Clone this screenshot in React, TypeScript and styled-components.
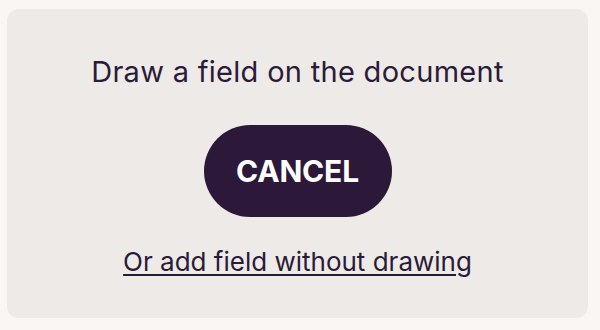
import React from "react";
import styled, { createGlobalStyle } from "styled-components";

const GlobalStyle = createGlobalStyle`
  html, body {
    margin: 0;
    padding: 0;
    background: #f9f6f3;
    font-family: Inter, "Noto Sans", sans-serif;
  }
`;

const Page = styled.div`
  padding: 9px 12px 12px 7px;
`;

const Panel = styled.div`
  height: 309px;
  box-sizing: border-box;
  background: #eeeae7;
  border-radius: 12px;
  display: flex;
  flex-direction: column;
  align-items: center;
  padding-top: 46px;
`;

const Title = styled.div`
  font-size: 29px;
  line-height: 34px;
  color: #2a1b38;
  letter-spacing: 0.3px;
`;

const CancelButton = styled.button`
  margin-top: 36px;
  width: 188px;
  height: 92px;
  border: none;
  border-radius: 46px;
  background: #2c1838;
  color: #ffffff;
  font-family: Inter, "Noto Sans", sans-serif;
  font-weight: 700;
  font-size: 30px;
  letter-spacing: -0.2px;
  cursor: pointer;
`;

const Link = styled.a`
  margin-top: 29px;
  font-size: 26px;
  line-height: 32px;
  color: #2a1b38;
  text-decoration: underline;
  text-underline-offset: 3px;
  text-decoration-thickness: 2px;
  cursor: pointer;
`;

export default function App() {
  return (
    <Page>
      <GlobalStyle />
      <Panel>
        <Title>Draw a field on the document</Title>
        <CancelButton>CANCEL</CancelButton>
        <Link>Or add field without drawing</Link>
      </Panel>
    </Page>
  );
}
